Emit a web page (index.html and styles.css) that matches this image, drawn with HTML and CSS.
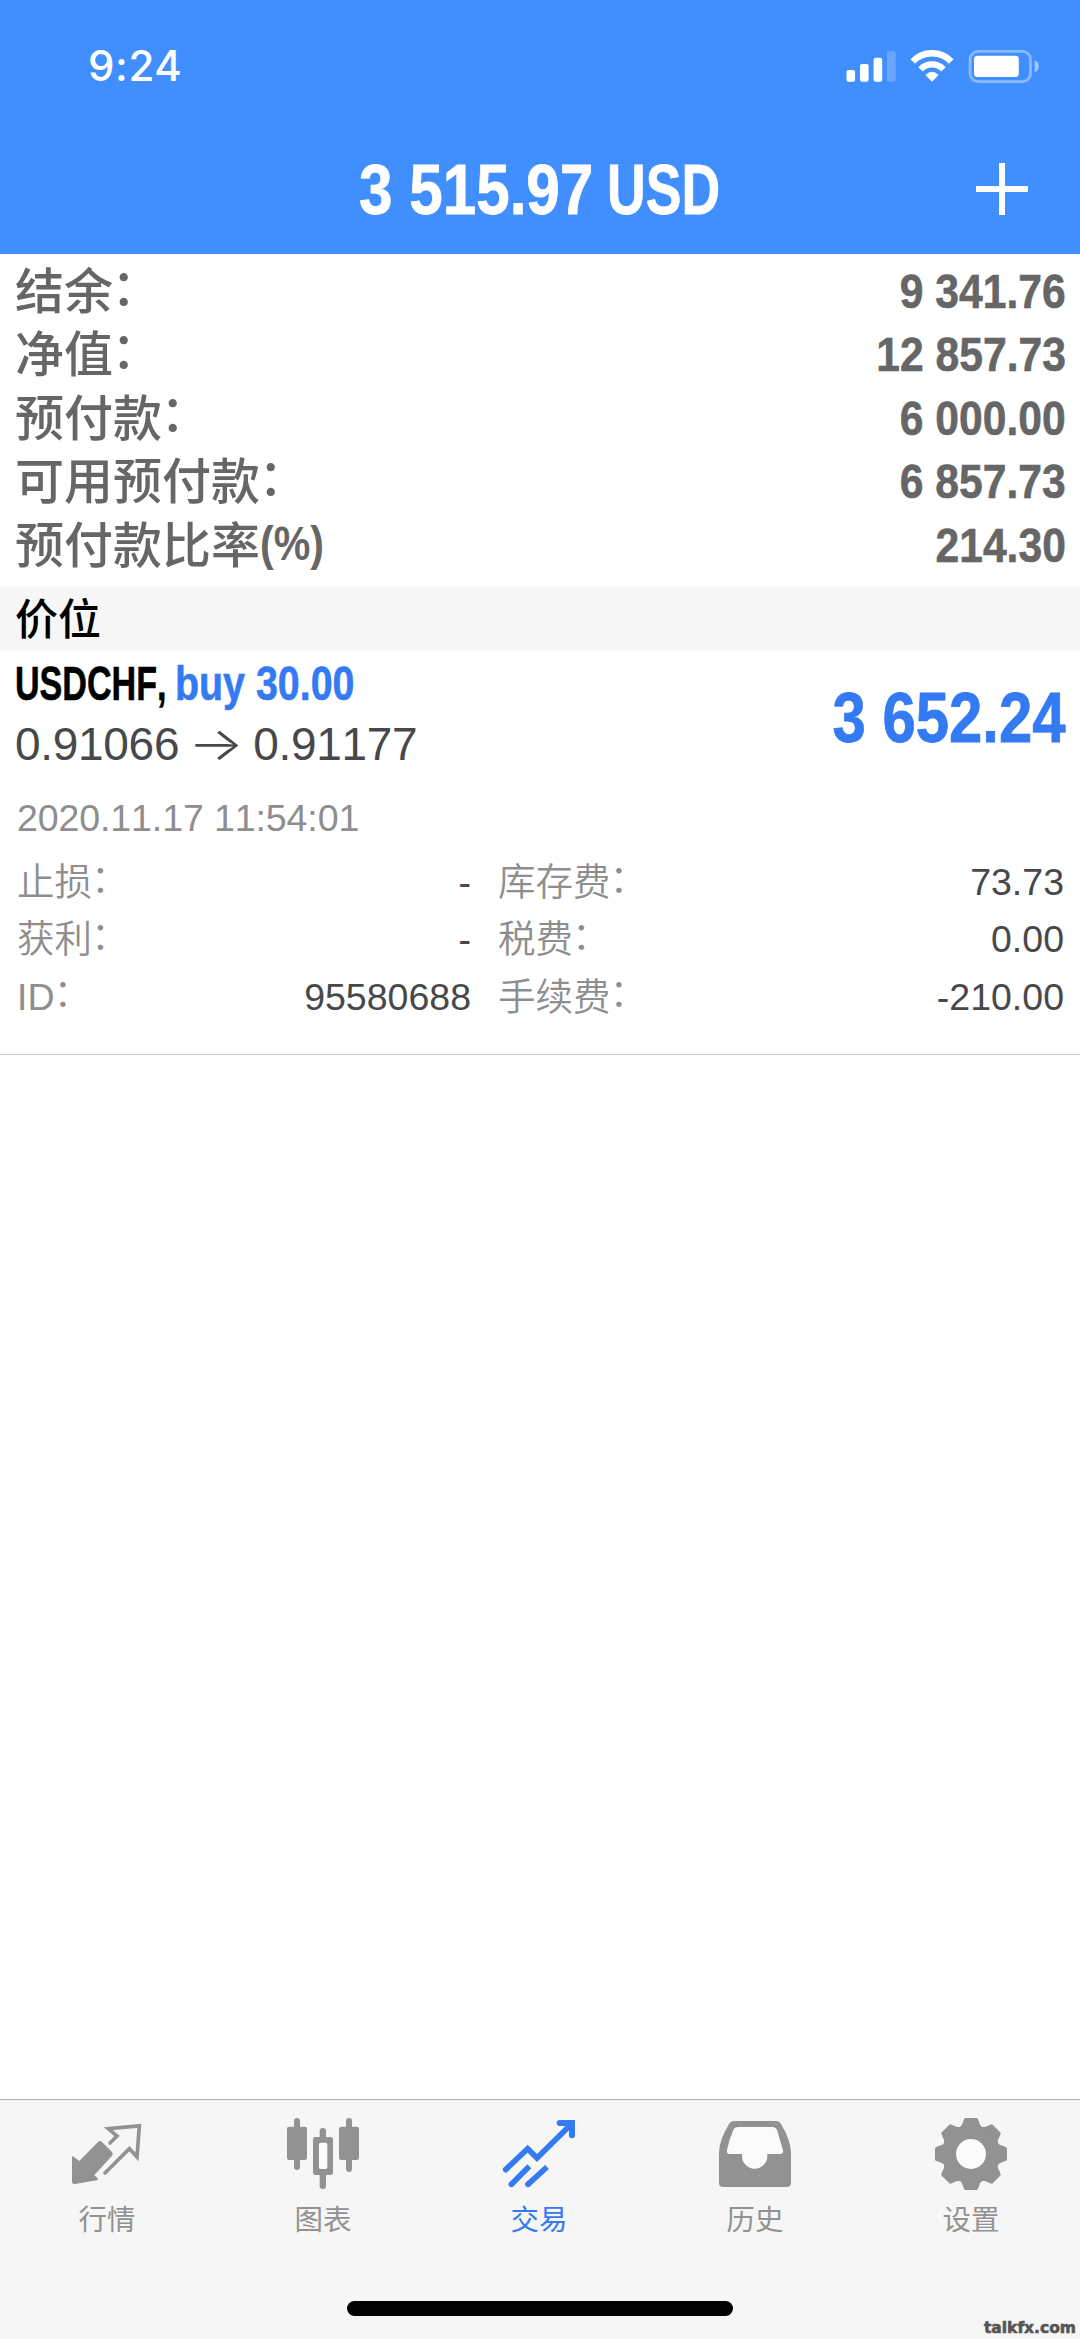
FILE: index.html
```html
<!DOCTYPE html>
<html lang="zh-CN">
<head>
<meta charset="utf-8">
<title>交易</title>
<link rel="stylesheet" href="styles.css">
</head>
<body>
<div class="screen">
  <header class="header">
    <div class="status">
      <span class="time">9:24</span>
      <svg class="status-icons" viewBox="846 46 194 40">
        <g fill="#fff">
          <rect x="846.5" y="70" width="8.6" height="11.8" rx="2"/>
          <rect x="860" y="64" width="8.6" height="17.8" rx="2"/>
          <rect x="873.6" y="57.7" width="8.6" height="24.1" rx="2"/>
          <rect x="887" y="51" width="8.6" height="30.8" rx="2" opacity=".22"/>
          <path d="M932 81.7 925.4 75Q932 68.6 938.6 75Z"/>
          <rect x="974" y="55.7" width="44.8" height="21.4" rx="3.5"/>
          <path d="M1034.6 60.3Q1038.8 62 1038.8 66.3T1034.6 72.3Z" opacity=".5"/>
        </g>
        <g fill="none" stroke="#fff">
          <path d="M912.8 61.5A26.6 26.6 0 0 1 951.2 61.5" stroke-width="6.6"/>
          <path d="M920.6 69.4A15.6 15.6 0 0 1 943.4 69.4" stroke-width="6.2"/>
          <rect x="970.1" y="51.3" width="60.4" height="30.4" rx="8" stroke-width="2.8" opacity=".38"/>
        </g>
      </svg>
    </div>
    <div class="nav">
      <h1 class="title"><span class="title-num">3 515.97</span><span class="title-cur">USD</span></h1>
      <svg class="plus" viewBox="0 0 52 52"><path d="M0 26H52M26 0V52" stroke="#fff" stroke-width="6"/></svg>
    </div>
  </header>

  <section class="summary">
    <div class="row"><span class="label">结余<i class="colon">：</i></span><span class="value">9 341.76</span></div>
    <div class="row"><span class="label">净值<i class="colon">：</i></span><span class="value">12 857.73</span></div>
    <div class="row"><span class="label">预付款<i class="colon">：</i></span><span class="value">6 000.00</span></div>
    <div class="row"><span class="label">可用预付款<i class="colon">：</i></span><span class="value">6 857.73</span></div>
    <div class="row"><span class="label">预付款比率<span class="pct">(%)</span></span><span class="value">214.30</span></div>
  </section>

  <h2 class="section">价位</h2>

  <article class="position">
    <div class="top">
      <div>
        <div class="symbol"><span class="pair">USDCHF,</span><span class="side">buy 30.00</span></div>
        <div class="prices"><span>0.91066</span><span class="arrow">→</span><span>0.91177</span></div>
      </div>
      <span class="profit">3 652.24</span>
    </div>
    <div class="date">2020.11.17 11:54:01</div>
    <div class="details">
      <div class="cell"><span class="key">止损<i class="colon">：</i></span><span>-</span></div>
      <div class="cell"><span class="key">库存费<i class="colon">：</i></span><span>73.73</span></div>
      <div class="cell"><span class="key">获利<i class="colon">：</i></span><span>-</span></div>
      <div class="cell"><span class="key">税费<i class="colon">：</i></span><span>0.00</span></div>
      <div class="cell"><span class="key"><span class="latin">ID</span><i class="colon">：</i></span><span>95580688</span></div>
      <div class="cell"><span class="key">手续费<i class="colon">：</i></span><span>-210.00</span></div>
    </div>
  </article>

  <footer class="footer">
    <nav class="tabs">
      <div class="tab">
        <svg class="icon" viewBox="201 102 240 228">
          <path fill="currentColor" d="M216 231Q217 227 221 230L238 243 294 186Q300 180 306 186L336 216Q341 221 336 227L283 285 292 294Q296 299 290 301L225 312Q216 313 216 305Z"/>
          <path fill="none" stroke="currentColor" stroke-width="11" stroke-linecap="round" d="M330 189 351 168 325 146 418 137.500 411 231 388 206 315 279"/>
        </svg>
        <span>行情</span>
      </div>
      <div class="tab">
        <svg class="icon" viewBox="849 102 240 228">
          <g fill="currentColor">
            <rect x="861" y="140" width="60" height="100" rx="7"/><rect x="882" y="114" width="18" height="156" rx="9"/>
            <rect x="1017" y="140" width="60" height="100" rx="7"/><rect x="1038" y="114" width="18" height="162" rx="9"/>
            <rect x="939" y="171" width="60" height="114" rx="7"/><rect x="959" y="144" width="19" height="183" rx="9"/>
          </g>
          <rect x="957" y="188" width="25" height="79" rx="5" fill="#fbfbfb"/>
        </svg>
        <span>图表</span>
      </div>
      <div class="tab active">
        <svg class="icon" viewBox="297 102 240 228">
          <g fill="none" stroke="currentColor" stroke-width="17">
            <path stroke-linecap="round" d="M317 269 383 206 411 234 512 134"/>
            <path stroke-linecap="round" stroke-width="18" d="M479 129H516V166"/>
            <path d="M333 314 388 259M383 314 441 261"/>
          </g>
          <g fill="currentColor"><circle cx="334" cy="313" r="8.5"/><circle cx="384" cy="313" r="8.500"/><path d="M490 129H517V156Z"/></g>
        </svg>
        <span>交易</span>
      </div>
      <div class="tab">
        <svg class="icon" viewBox="105 102 240 228">
          <path fill="currentColor" d="M163 123H288Q298 123 303 132Q333 182 333 218V308Q333 321 320 321H130Q117 321 117 308V218Q117 182 147 132Q152 123 163 123Z"/>
          <path fill="#fbfbfb" d="M174 141H277Q287 141 291 150L309 211Q311 222 302 222H262V228A38 38 0 0 1 186 228V222H149Q139 221 141 210Q147 180 160 150Q164 141 174 141Z"/>
        </svg>
        <span>历史</span>
      </div>
      <div class="tab">
        <svg class="icon" viewBox="753 102 240 228">
          <defs><path id="tooth" d="M857 119H889Q893 128 896 138L908 150H838L850 138Q853 128 857 119Z"/></defs>
          <g fill="currentColor" stroke="currentColor" stroke-width="10" stroke-linejoin="round">
            <circle cx="873" cy="222" r="81"/>
            <use href="#tooth"/><use href="#tooth" transform="rotate(45 873 222)"/><use href="#tooth" transform="rotate(90 873 222)"/><use href="#tooth" transform="rotate(135 873 222)"/><use href="#tooth" transform="rotate(180 873 222)"/><use href="#tooth" transform="rotate(225 873 222)"/><use href="#tooth" transform="rotate(270 873 222)"/><use href="#tooth" transform="rotate(315 873 222)"/>
          </g>
          <circle cx="873" cy="222" r="45" fill="#fbfbfb"/>
        </svg>
        <span>设置</span>
      </div>
    </nav>
    <div class="home"></div>
    <span class="credit">talkfx.com</span>
  </footer>
</div>
</body>
</html>
```
FILE: styles.css
```css
* { box-sizing: border-box; }

body {
  margin: 0;
  background: #fff;
  font-family: "Liberation Sans", "Noto Sans CJK SC", sans-serif;
  font-kerning: none;
}

.screen {
  display: flex;
  flex-direction: column;
  width: 1080px;
  height: 2339px;
  overflow: hidden;
}

.header {
  height: 254px;
  background: #418fff;
  color: #fff;
}

.status {
  display: flex;
  justify-content: space-between;
  align-items: center;
  height: 126px;
  padding: 6px 40px 0 88px;
}

.time {
  font: 500 42px/50px Inter, sans-serif;
  letter-spacing: .6px;
}

.status-icons {
  width: 194px;
  height: 40px;
}

.nav {
  display: grid;
  grid-template-columns: 1fr 356px 1fr;
  align-items: center;
  height: 126px;
  padding: 0 52px 0 46px;
}

.title {
  grid-column: 2;
  display: flex;
  margin: 1px 0 0;
  font-size: 70px;
  line-height: 80px;
  white-space: nowrap;
  -webkit-text-stroke: .8px currentColor;
}

.title-num {
  width: 248px;
  transform: scaleX(.86);
  transform-origin: left;
}

.title-cur {
  width: 108px;
  transform: scaleX(.765);
  transform-origin: left;
}

.plus {
  justify-self: end;
  width: 52px;
  height: 52px;
}

.summary {
  height: 333px;
  padding: 2px 14px 0 15px;
  color: #666;
}

.row {
  display: flex;
  justify-content: space-between;
  align-items: baseline;
  height: 63.4px;
  line-height: 63.4px;
  font-size: 49px;
}

.label {
  font-family: "Noto Sans CJK SC", sans-serif;
  font-weight: 500;
}

.colon {
  position: relative;
  top: -.09em;
  left: -.03em;
  font-style: normal;
}

.pct {
  display: inline-block;
  font-family: "Liberation Sans", sans-serif;
  font-weight: 700;
  transform: translateY(-3px) scaleX(.84);
  transform-origin: left;
}

.value {
  font-weight: 700;
  -webkit-text-stroke: .6px currentColor;
  transform: translateY(-1px) scaleX(.87);
  transform-origin: right;
}

.section {
  height: 64px;
  margin: 0;
  padding-left: 15px;
  background: #f7f7f7;
  font: 500 43px/59px "Noto Sans CJK SC", sans-serif;
}

.position {
  height: 404px;
  padding: 2px 15px 0;
  border-bottom: 1px solid #c8c8c8;
  color: #48484a;
}

.top {
  display: flex;
  justify-content: space-between;
}

.symbol {
  display: flex;
  height: 61px;
  font-size: 48px;
  font-weight: 700;
  line-height: 61px;
  white-space: nowrap;
  -webkit-text-stroke: .6px currentColor;
}

.pair {
  width: 160px;
  color: #000;
  transform: scaleX(.71);
  transform-origin: left;
}

.side {
  color: #347af2;
  transform: scaleX(.82);
  transform-origin: left;
}

.prices {
  display: flex;
  font-size: 46px;
  line-height: 60px;
  letter-spacing: -.3px;
}

.arrow {
  width: 74px;
  font-family: Inter, sans-serif;
  font-weight: 300;
  text-align: center;
  transform: translateY(-1px) scaleX(1.28);
}

.profit {
  margin-top: 25px;
  color: #347af2;
  font-size: 70px;
  font-weight: 700;
  line-height: 80px;
  -webkit-text-stroke: .8px currentColor;
  transform: scaleX(.855);
  transform-origin: right;
}

.date {
  margin-top: 14px;
  padding-left: 2px;
  color: #8e8e8e;
  font-size: 37.5px;
  line-height: 60px;
  letter-spacing: -.1px;
}

.details {
  display: grid;
  grid-template-columns: 454px 566px;
  grid-auto-rows: 57.4px;
  column-gap: 27px;
  margin-top: 2px;
  padding-left: 2px;
  font-size: 37.5px;
  line-height: 57.4px;
}

.cell {
  display: flex;
  justify-content: space-between;
  align-items: baseline;
}

.key {
  color: #8e8e8e;
  font-family: "Noto Sans CJK SC", sans-serif;
  font-weight: 350;
}

.latin {
  font-family: "Liberation Sans", sans-serif;
}

.footer {
  position: relative;
  height: 240px;
  margin-top: auto;
  border-top: 1px solid #b2b2b2;
  background: #f6f6f6;
}

.tabs {
  display: grid;
  grid-template-columns: repeat(5, 216px);
  margin-left: -1px;
  padding-top: 14px;
}

.tab {
  display: flex;
  flex-direction: column;
  align-items: center;
  gap: 10px;
  color: #929292;
  font: 400 28.5px/36px "Noto Sans CJK SC", sans-serif;
}

.active {
  color: #347af2;
}

.icon {
  width: 80px;
  height: 76px;
}

.home {
  width: 386px;
  height: 15px;
  margin: 65px auto 0;
  border-radius: 8px;
  background: #000;
}

.credit {
  position: absolute;
  right: 4px;
  bottom: 1px;
  color: #555;
  font: 700 15.5px/20px "DejaVu Sans", sans-serif;
  -webkit-text-stroke: .6px currentColor;
}
```
